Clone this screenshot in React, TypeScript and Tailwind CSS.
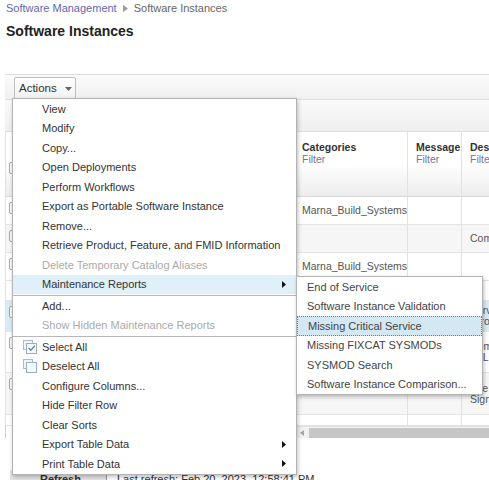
import type { ReactNode } from "react";

type Row = {
  h: string;
  bg: string;
  cat?: string;
  msg?: string;
  desc?: string[];
  box?: boolean;
};

const rows: Row[] = [
  { h: "h-[28px]", bg: "bg-white", cat: "Marna_Build_Systems", box: true },
  { h: "h-[28px]", bg: "bg-[#f6f6f6]", desc: ["Com"], box: true },
  { h: "h-[28px]", bg: "bg-white", cat: "Marna_Build_Systems", box: true },
  { h: "h-[20px]", bg: "bg-white" },
  { h: "h-[31px]", bg: "bg-[#d9ecf6]", desc: ["Service", "Error"], box: true },
  { h: "h-[41px]", bg: "bg-white", desc: ["Component", "ALL"], box: true },
  { h: "h-[42px]", bg: "bg-[#f6f6f6]", desc: ["The", "Signed"], box: true },
  { h: "h-[11px]", bg: "bg-white" },
];

const mainMenu: { label: string; disabled?: boolean; sub?: boolean; active?: boolean; icon?: "check" | "uncheck"; sep?: boolean }[] = [
  { label: "View" },
  { label: "Modify" },
  { label: "Copy..." },
  { label: "Open Deployments" },
  { label: "Perform Workflows" },
  { label: "Export as Portable Software Instance" },
  { label: "Remove..." },
  { label: "Retrieve Product, Feature, and FMID Information" },
  { label: "Delete Temporary Catalog Aliases", disabled: true },
  { label: "Maintenance Reports", sub: true, active: true, sep: true },
  { label: "Add..." },
  { label: "Show Hidden Maintenance Reports", disabled: true, sep: true },
  { label: "Select All", icon: "check" },
  { label: "Deselect All", icon: "uncheck" },
  { label: "Configure Columns..." },
  { label: "Hide Filter Row" },
  { label: "Clear Sorts" },
  { label: "Export Table Data", sub: true },
  { label: "Print Table Data", sub: true },
];

const subMenu = [
  "End of Service",
  "Software Instance Validation",
  "Missing Critical Service",
  "Missing FIXCAT SYSMODs",
  "SYSMOD Search",
  "Software Instance Comparison...",
];

function SubArrow() {
  return (
    <svg width="4" height="7" viewBox="0 0 4 7" className="shrink-0">
      <path d="M0 0 L4 3.5 L0 7 Z" fill="#111" />
    </svg>
  );
}

function SelectIcon({ checked }: { checked: boolean }) {
  return (
    <svg width="14" height="14" viewBox="0 0 14 14">
      <rect x="0.5" y="0.5" width="9" height="9" fill="#f1f5f9" stroke="#a9bccf" />
      <rect x="3.5" y="3.5" width="10" height="10" fill="#f7fafd" stroke="#98afc6" />
      {checked && <path d="M5.5 8 L7.8 10.3 L11.8 5.8" fill="none" stroke="#6a86a3" strokeWidth="1.3" />}
    </svg>
  );
}

function Checkbox() {
  return <div className="w-[11px] h-[12px] rounded-[2px] border border-[#a9a9a9] bg-[#f8f8f8]" />;
}

function Cell({ w, children, className = "" }: { w: string; children?: ReactNode; className?: string }) {
  return <div className={`${w} shrink-0 border-r border-[#e2e2e2] h-full overflow-hidden ${className}`}>{children}</div>;
}

export default function App() {
  return (
    <div className="relative w-[489px] h-[480px] overflow-hidden bg-white font-['Liberation_Sans',Arial,sans-serif] text-[#333]">
      {/* breadcrumb */}
      <div className="flex items-center gap-[6px] pl-[6px] pt-[1px] h-[15px] text-[11px] leading-[13px]">
        <span className="text-[#6467b0]">Software Management</span>
        <svg width="5" height="7" viewBox="0 0 5 7">
          <path d="M0 0 L5 3.5 L0 7 Z" fill="#9a9a9a" />
        </svg>
        <span className="text-[#666]">Software Instances</span>
      </div>
      <h1 className="pl-[6px] mt-[8px] text-[14px] leading-[17px] font-bold text-[#222]">Software Instances</h1>

      {/* table */}
      <div className="ml-[5px] mt-[34px] w-[484px] overflow-hidden">
        <div className="h-[25px] border-t border-[#dcdcdc] bg-gradient-to-b from-[#fbfbfb] to-[#f0f0f0] pl-[9px] pt-[2px]">
          <div className="w-[62px] h-[23px] border border-[#bdbdbd] rounded-t-[2px] bg-gradient-to-b from-white to-[#f1f1f1] flex items-center pl-[4px] text-[11.5px] text-[#333]">
            Actions
            <svg width="7" height="4" viewBox="0 0 7 4" className="ml-[8px]">
              <path d="M0 0 L7 0 L3.5 4 Z" fill="#666" />
            </svg>
          </div>
        </div>
        <div className="h-[33px] bg-gradient-to-b from-[#fafafa] to-[#efefef] border-t border-b border-[#dedede]" />
        <div className="h-[65px] flex bg-gradient-to-b from-white via-white to-[#ececec] border-b border-[#d8d8d8] text-[10.5px] leading-[12px]">
          <Cell w="w-[291px]" className="border-l border-[#cfcfcf] pl-[3px] pt-[30px]">
            <Checkbox />
          </Cell>
          <Cell w="w-[112px]" className="pl-[6px] pt-[9px]">
            <div className="font-bold text-[#333]">Categories</div>
            <div className="text-[#77779a]">Filter</div>
          </Cell>
          <Cell w="w-[54px]" className="pl-[8px] pt-[9px]">
            <div className="font-bold text-[#333] whitespace-nowrap">Message</div>
            <div className="text-[#77779a]">Filter</div>
          </Cell>
          <Cell w="w-[80px]" className="pl-[8px] pt-[9px]">
            <div className="font-bold text-[#333] whitespace-nowrap">Description</div>
            <div className="text-[#77779a]">Filter</div>
          </Cell>
        </div>
        {rows.map((r, i) => (
          <div key={i} className={`flex ${r.h} ${r.bg} border-b border-[#e4e4e4] text-[10.5px] leading-[11px] text-[#555]`}>
            <Cell w="w-[291px]" className="border-l border-[#cfcfcf] pl-[3px] pt-[5px]">
              {r.box && <Checkbox />}
            </Cell>
            <Cell w="w-[112px]" className="pl-[6px] flex items-center whitespace-nowrap">
              {r.cat}
            </Cell>
            <Cell w="w-[54px]" className="pl-[8px] flex items-center">
              {r.msg}
            </Cell>
            <Cell w="w-[80px]" className="pl-[8px] flex flex-col justify-center whitespace-nowrap">
              {r.desc?.map((d) => (
                <div key={d}>{d}</div>
              ))}
            </Cell>
          </div>
        ))}
        <div className="flex h-[12px]">
          <div className="w-[291px] border-l border-[#cfcfcf] bg-white" />
          <div className="flex-1 flex items-center bg-[#f1f1f1] border-t border-[#e0e0e0]">
            <svg width="4" height="6" viewBox="0 0 4 6" className="ml-[4px]">
              <path d="M4 0 L0 3 L4 6 Z" fill="#a5a5a5" />
            </svg>
            <div className="ml-[5px] flex-1 h-[10px] bg-[#c6c6c6]" />
          </div>
        </div>
      </div>

      {/* footer */}
      <div className="mt-[32px] ml-[10px] flex items-center h-[18px] text-[11px]">
        <div className="w-[97px] h-full bg-[#e4e4e4] border-r border-[#9a9a9a] flex items-center pl-[30px] font-bold text-[#333]">
          Refresh
        </div>
        <div className="pl-[10px] text-[#333]">Last refresh: Feb 20, 2023, 12:58:41 PM</div>
      </div>

      {/* actions menu */}
      <div className="absolute left-[12px] top-[98px] w-[285px] bg-white border border-[#b3b3b3] shadow-[1px_2px_4px_rgba(0,0,0,0.25)] text-[11px] text-[#333]">
        {mainMenu.map((m) => (
          <div key={m.label}>
            <div
              className={`h-[19.5px] flex items-center pr-[10px] ${m.active ? "bg-[#dff0f8]" : ""} ${
                m.disabled ? "text-[#aaaaaa]" : ""
              }`}
            >
              <div className="w-[29px] shrink-0 pl-[10px] flex items-center">
                {m.icon && <SelectIcon checked={m.icon === "check"} />}
              </div>
              <span className="flex-1 whitespace-nowrap">{m.label}</span>
              {m.sub && <SubArrow />}
            </div>
            {m.sep && <div className="h-px bg-[#b8b8b8] mt-px" />}
          </div>
        ))}
      </div>

      {/* maintenance reports submenu */}
      <div className="absolute left-[296px] top-[276px] w-[187px] bg-white border border-[#b3b3b3] shadow-[1px_2px_4px_rgba(0,0,0,0.25)] text-[11px] text-[#444]">
        {subMenu.map((s) => (
          <div
            key={s}
            className={`h-[19.5px] flex items-center pl-[10px] whitespace-nowrap ${
              s === "Missing Critical Service" ? "bg-[#d3e8f3] border border-dotted border-[#6b7b88] pl-[9px]" : ""
            }`}
          >
            {s}
          </div>
        ))}
      </div>
    </div>
  );
}
